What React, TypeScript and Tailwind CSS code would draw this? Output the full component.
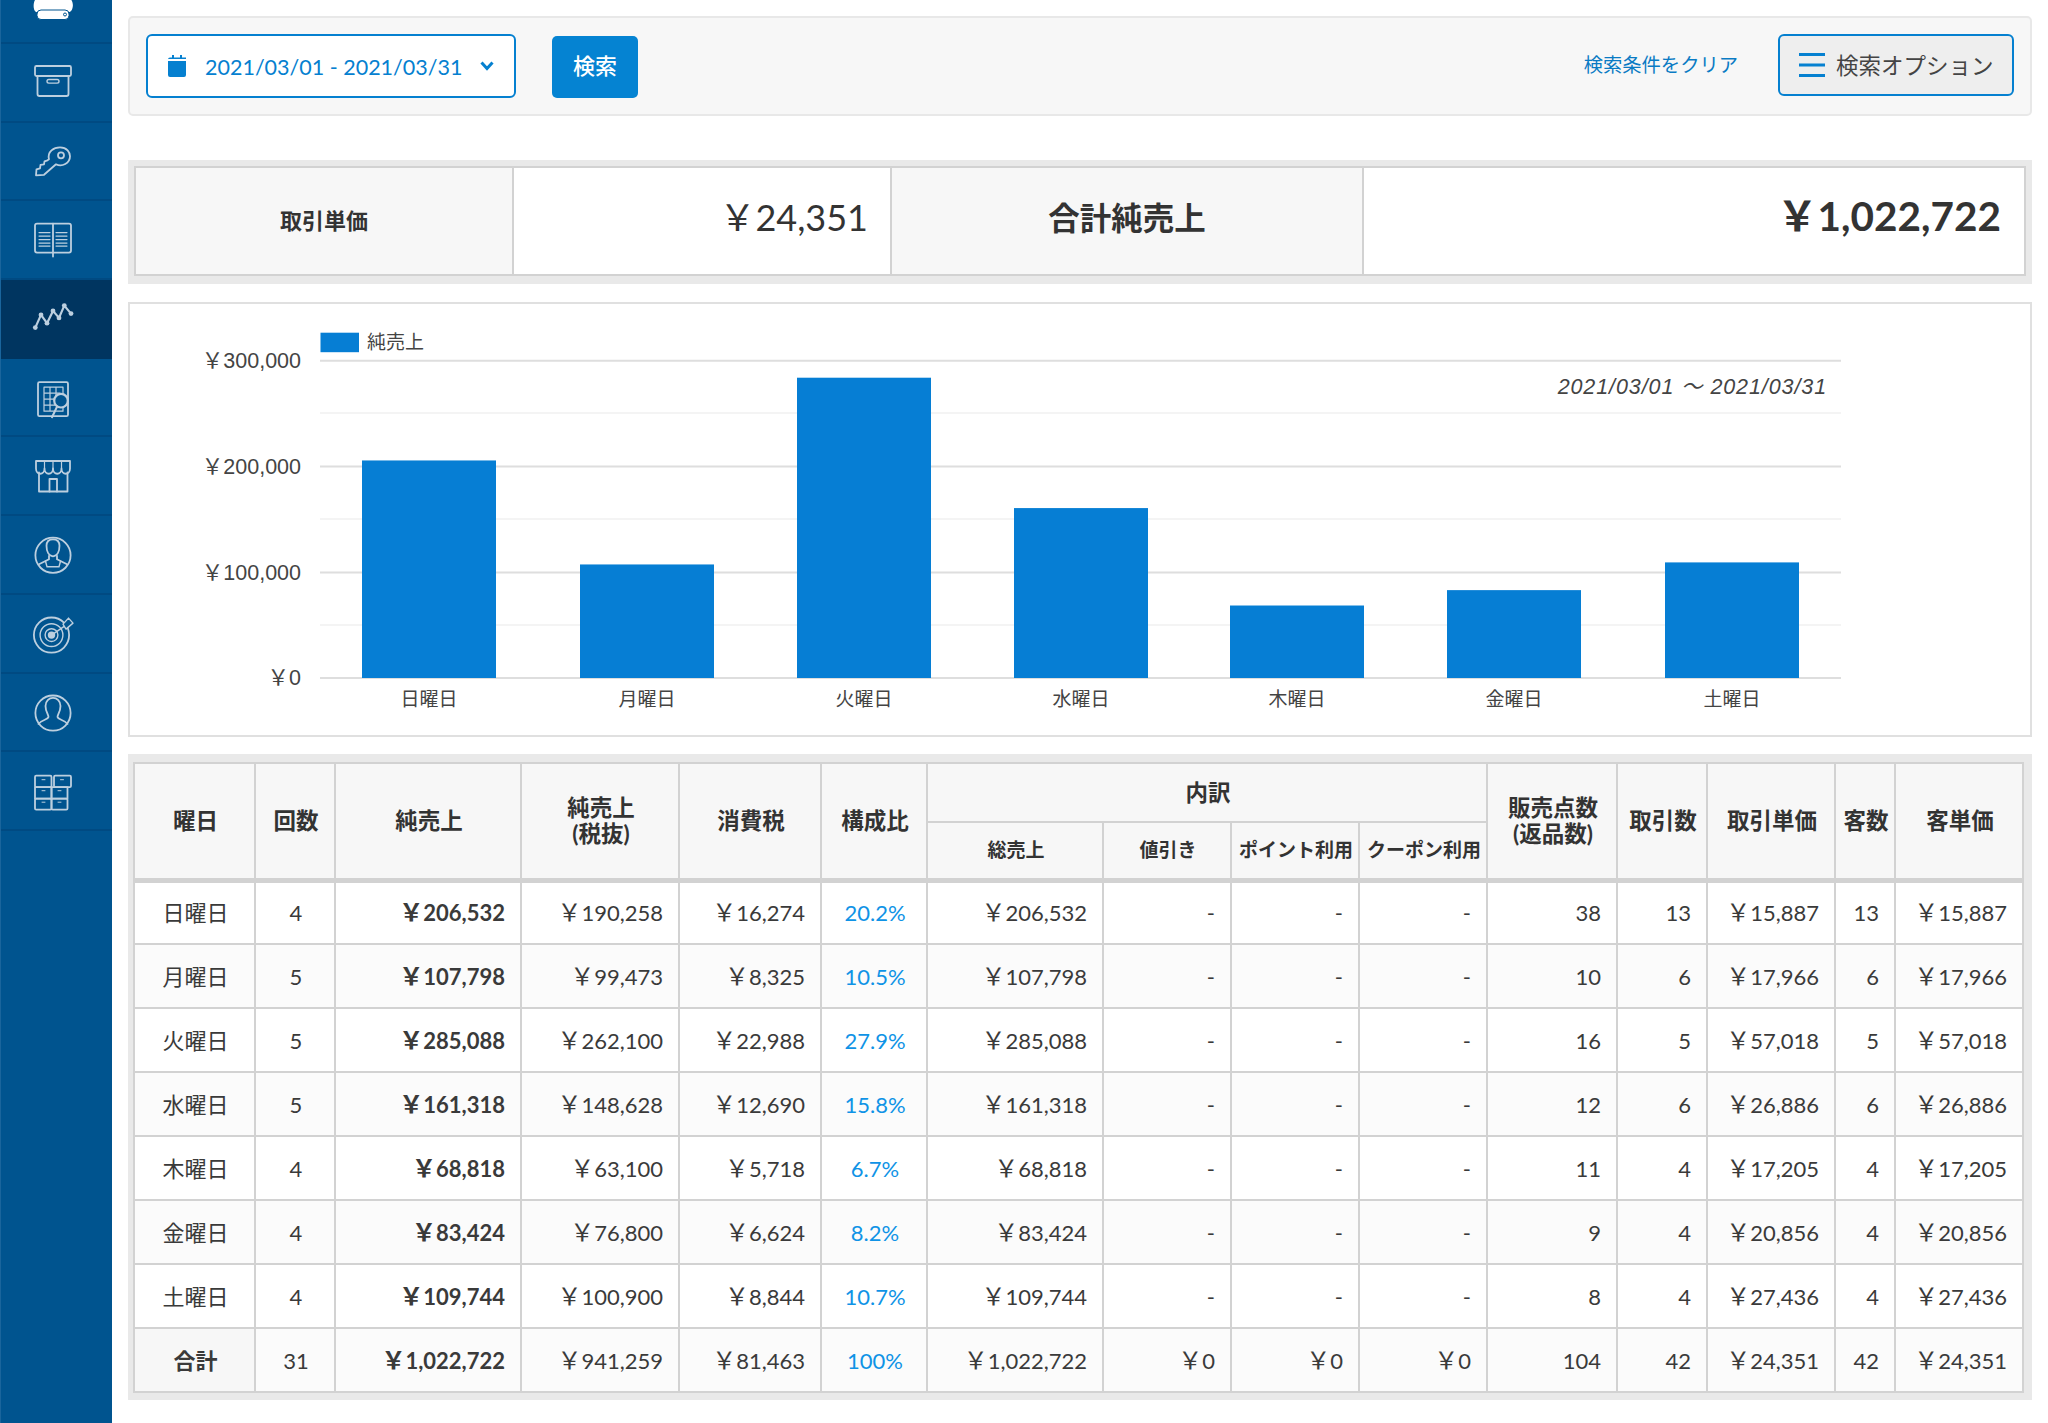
import React from "react";

const Y = "\uFFE5";
const ICON = "#bccfdf";

function Yen() {
  return <span className="text-[24px] leading-none">{Y}</span>;
}

function RowIcon({ top, children }: { top: number; children: React.ReactNode }) {
  return (
    <svg width="112" height="77" viewBox={`0 ${top} 112 77`} fill="none" stroke={ICON} strokeWidth="1.8" strokeLinecap="round" strokeLinejoin="round" className="block">
      {children}
    </svg>
  );
}

const sideIcons: { top: number; active?: boolean; el: React.ReactNode }[] = [
  {
    top: 44,
    el: (
      <>
        <rect x="35" y="66" width="36" height="10" rx="1.5" />
        <path d="M37.5 76v18a2 2 0 0 0 2 2h27a2 2 0 0 0 2-2V76" />
        <rect x="47" y="79.5" width="12" height="3.6" rx="1.8" strokeWidth="1.4" />
      </>
    ),
  },
  {
    top: 122.7,
    el: (
      <>
        <path d="M49 159C47 151 54 147 60 147C67 147 70 152 70 156C70 163 62 167 56 164L44 174.5L36 175L36.5 169L40 168L40.5 164.5L44 164L44.5 161L47.5 160Z" />
        <circle cx="61" cy="155" r="3" />
      </>
    ),
  },
  {
    top: 201.4,
    el: (
      <>
        <rect x="35" y="224" width="36" height="29" rx="2" />
        <path d="M53 224V257" />
        <path d="M39 233H50M39 236.5H50M39 240H50M39 243.5H50M39 246.5H50M56 233H67M56 236.5H67M56 240H67M56 243.5H67M56 246.5H67" strokeWidth="1.2" />
      </>
    ),
  },
  {
    top: 280.1,
    active: true,
    el: (
      <>
        <path d="M35.3 327.7L41 315L47 323.3L53 311L59 318L64.3 305.7L71 313.7" strokeWidth="2.2" />
        <g fill={ICON} stroke="none">
          <circle cx="35.3" cy="327.7" r="2.4" />
          <circle cx="41" cy="315" r="2.4" />
          <circle cx="47" cy="323.3" r="2.4" />
          <circle cx="53" cy="311" r="2.4" />
          <circle cx="59" cy="318" r="2.4" />
          <circle cx="64.3" cy="305.7" r="2.4" />
          <circle cx="71" cy="313.7" r="2.4" />
        </g>
      </>
    ),
  },
  {
    top: 358.8,
    el: (
      <>
        <rect x="38" y="382" width="30" height="34" rx="1.5" />
        <path d="M44 387H63V411H44ZM44 393H60M44 399H58M44 405H55M50 387V411M56 387V398" strokeWidth="1.2" />
        <circle cx="61" cy="400.5" r="6.8" fill="#00548f" strokeWidth="2.2" />
        <path d="M57 406.5L52 417" strokeWidth="2" />
      </>
    ),
  },
  {
    top: 437.5,
    el: (
      <>
        <path d="M36 461.5H70V469C70 476 61.5 476 61.5 469C61.5 476 53 476 53 469C53 476 44.5 476 44.5 469C44.5 476 36 476 36 469Z" />
        <path d="M44.5 461.5V469M53 461.5V469M61.5 461.5V469" strokeWidth="1.2" />
        <path d="M39 473V492H67.5V473" />
        <path d="M49.5 492V479.5H57V492" />
      </>
    ),
  },
  {
    top: 516.2,
    el: (
      <>
        <circle cx="53" cy="555.5" r="17.6" />
        <path d="M46.5 546C46.5 541.5 49.5 539.5 53 539.5C56.5 539.5 59.5 541.5 59.5 546C59.5 551 57.5 556 53 556.5C48.5 556 46.5 551 46.5 546Z" />
        <path d="M49 556V559.5L39 564.5M57 556V559.5L67 564.5" />
        <path d="M45.5 561.5L47 567H59L60.5 561.5" strokeWidth="1.4" />
      </>
    ),
  },
  {
    top: 594.9,
    el: (
      <>
        <circle cx="51.5" cy="635" r="17.6" />
        <circle cx="51.5" cy="635" r="11.4" strokeWidth="1.4" />
        <circle cx="51.5" cy="635" r="6.4" strokeWidth="1.4" />
        <circle cx="51.5" cy="635" r="2.8" fill={ICON} />
        <path d="M51.5 635L66 625" strokeWidth="1.4" />
        <path d="M63 624L68.5 618L73 623L66 629Z" fill="#00548f" strokeWidth="1.4" />
      </>
    ),
  },
  {
    top: 673.6,
    el: (
      <>
        <circle cx="53" cy="712.7" r="17.6" />
        <path d="M38.5 723.5C41 719.5 48 719.5 48.5 716.5C48.5 714.5 45.5 711 45.5 705.5C45.5 700.5 49 697.5 53 697.5C57 697.5 60.5 700.5 60.5 705.5C60.5 711 57.5 714.5 57.5 716.5C58 719.5 65 719.5 67.5 723.5" />
      </>
    ),
  },
  {
    top: 752.3,
    el: (
      <>
        <rect x="35" y="776" width="16.5" height="11.5" rx="1.2" />
        <rect x="54" y="776" width="17" height="11.5" rx="1.2" />
        <rect x="35" y="787.5" width="16.5" height="11.5" />
        <rect x="51.5" y="787.5" width="16" height="11.5" />
        <rect x="35" y="799" width="16.5" height="11" rx="1.2" />
        <rect x="51.5" y="799" width="16" height="11" rx="1.2" />
        <path d="M42 780H45M60.5 780H63.5M42 791H45M58 791H61M42 802.5H45M58 802.5H61" strokeWidth="1" />
      </>
    ),
  },
];

function Sidebar() {
  return (
    <aside className="w-[112px] shrink-0 h-[1423px] bg-[#00548f] border-l border-l-[#1a659c] flex flex-col overflow-hidden">
      <div className="h-[44px] shrink-0 border-b-2 border-[#004a82] overflow-hidden">
        <svg width="112" height="42" viewBox="0 0 112 42" className="block -ml-px">
          <path d="M40 -4H66C71 -3 74 3 72.500 8C71.500 13 67 13 66 11H40C38 13 34.500 13 33.800 8C33 3 35 -3 40 -4Z" fill="#fff" />
          <rect x="37" y="10" width="32" height="9.500" rx="4" fill="#fff" stroke="#00548f" strokeWidth="1" />
          <circle cx="65" cy="14.500" r="1.500" fill="none" stroke="#00548f" strokeWidth="1" />
        </svg>
      </div>
      {sideIcons.map((s) => (
        <div key={s.top} className={s.active ? "h-[78.7px] shrink-0 bg-[#003560] border-b-2 border-[#003560] -ml-px" : "h-[78.7px] shrink-0 border-b-2 border-[#004a82] -ml-px"}>
          <RowIcon top={s.top}>{s.el}</RowIcon>
        </div>
      ))}
    </aside>
  );
}

function SearchBar() {
  return (
    <div className="h-[100px] rounded-[5px] border-2 border-[#e8e8e8] bg-[#f7f7f7] flex items-center pl-[16px] pr-[16px]">
      <button className="w-[370px] h-[64px] rounded-[6px] border-2 border-[#0580d0] bg-white flex items-center pl-[20px] text-[#0580d0] text-[21.500px]">
        <svg width="18" height="22" viewBox="0 0 18 22" fill="#0580d0" className="shrink-0 mr-[19px]">
          <path d="M4 0h2v4H4zM12 0h2v4h-2z" />
          <path d="M2 2.500h16v1.500H0V4.500A2 2 0 0 1 2 2.500zM0 6h18v14a2 2 0 0 1-2 2H2a2 2 0 0 1-2-2z" />
        </svg>
        <span className="leading-none mt-[3px]">2021/03/01 - 2021/03/31</span>
        <svg width="14" height="10" viewBox="0 0 14 10" className="ml-[18px] -mt-[1px]" fill="none" stroke="#0580d0" strokeWidth="3">
          <path d="M1.500 1.500L7 7.500L12.500 1.500" />
        </svg>
      </button>
      <button className="ml-[36px] mt-[2px] w-[86px] h-[62px] rounded-[5px] bg-[#0583d2] text-white text-[22px] font-medium pb-[3px]">検索</button>
      <a className="ml-auto text-[19.300px] text-[#0a7bc4] -mt-[1px]">検索条件をクリア</a>
      <button className="ml-[40px] -mt-[2px] w-[236px] h-[62px] rounded-[6px] border-2 border-[#0580d0] bg-[#eeeeee] flex items-center pl-[19px] text-[22.500px] text-[#444] leading-none">
        <svg width="26" height="24" viewBox="0 0 26 24" fill="#0580d0" className="shrink-0 mr-[11px]">
          <rect x="0" y="0" width="26" height="3" />
          <rect x="0" y="10.500" width="26" height="3" />
          <rect x="0" y="21" width="26" height="3" />
        </svg>
        <span className="mt-[2px]">検索オプション</span>
      </button>
    </div>
  );
}

function Summary() {
  return (
    <div className="mt-[44px] h-[124px] bg-[#e9e9e9] p-[6px] pb-[8px]">
      <div className="h-[110px] border-2 border-[#d2d2d2] flex text-[#333]">
        <div className="w-[378px] bg-[#f7f7f7] border-r-2 border-[#d2d2d2] flex items-center justify-center text-[22px] font-bold pb-[2px]">取引単価</div>
        <div className="w-[378px] bg-white border-r-2 border-[#d2d2d2] flex items-center justify-end pr-[22px] text-[36px] pb-[8px]">{Y}24,351</div>
        <div className="w-[472px] bg-[#f7f7f7] border-r-2 border-[#d2d2d2] flex items-center justify-center text-[31.500px] font-bold pb-[4px]">合計純売上</div>
        <div className="flex-1 bg-white flex items-center justify-end pr-[23px] text-[40.500px] font-bold pb-[10px]">{Y}1,022,722</div>
      </div>
    </div>
  );
}

const bars = [
  { l: "日曜日", v: 206532, x: 362 },
  { l: "月曜日", v: 107798, x: 580 },
  { l: "火曜日", v: 285088, x: 797 },
  { l: "水曜日", v: 161318, x: 1014 },
  { l: "木曜日", v: 68818, x: 1230 },
  { l: "金曜日", v: 83424, x: 1447 },
  { l: "土曜日", v: 109744, x: 1665 },
];

function Chart() {
  const chartFont = '"Liberation Sans","Noto Sans CJK JP",sans-serif';
  return (
    <div className="mt-[18px] h-[435px] border-2 border-[#e0e0e0] bg-white">
      <svg width="1900" height="431" viewBox="130 304 1900 431" className="block" fontFamily={chartFont} fill="#444">
        {[413, 519, 625].map((y) => (
          <line key={y} x1="320" x2="1841" y1={y} y2={y} stroke="#f1f1f1" strokeWidth="1.5" />
        ))}
        {[360.7, 466.5, 572.5, 678].map((y) => (
          <line key={y} x1="320" x2="1841" y1={y} y2={y} stroke="#dedede" strokeWidth="2" />
        ))}
        {bars.map((b) => {
          const h = (b.v * 316) / 300000;
          return (
            <g key={b.x}>
              <rect x={b.x} y={678 - h} width="134" height={h} fill="#067ed4" />
              <text x={b.x + 67} y="706" fontSize="19" textAnchor="middle">{b.l}</text>
            </g>
          );
        })}
        {[
          ["¥300,000", 368],
          ["¥200,000", 474],
          ["¥100,000", 580],
          ["¥0", 685],
        ].map(([t, y]) => (
          <text key={t as string} x="301" y={y as number} fontSize="21.500" textAnchor="end">
            {(t as string).replace("¥", Y)}
          </text>
        ))}
        <rect x="320.500" y="332.700" width="38.500" height="19.500" fill="#067ed4" />
        <text x="367" y="349" fontSize="19">純売上</text>
        <text x="1827" y="393.500" fontSize="21.500" letterSpacing="0.9" textAnchor="end" fontStyle="italic">2021/03/01 〜 2021/03/31</text>
      </svg>
    </div>
  );
}

const rows = [
  ["日曜日", "4", "206,532", "190,258", "16,274", "20.2%", "206,532", "38", "13", "15,887", "13", "15,887"],
  ["月曜日", "5", "107,798", "99,473", "8,325", "10.5%", "107,798", "10", "6", "17,966", "6", "17,966"],
  ["火曜日", "5", "285,088", "262,100", "22,988", "27.9%", "285,088", "16", "5", "57,018", "5", "57,018"],
  ["水曜日", "5", "161,318", "148,628", "12,690", "15.8%", "161,318", "12", "6", "26,886", "6", "26,886"],
  ["木曜日", "4", "68,818", "63,100", "5,718", "6.7%", "68,818", "11", "4", "17,205", "4", "17,205"],
  ["金曜日", "4", "83,424", "76,800", "6,624", "8.2%", "83,424", "9", "4", "20,856", "4", "20,856"],
  ["土曜日", "4", "109,744", "100,900", "8,844", "10.7%", "109,744", "8", "4", "27,436", "4", "27,436"],
];
const total = ["合計", "31", "1,022,722", "941,259", "81,463", "100%", "1,022,722", "104", "42", "24,351", "42", "24,351"];

const widths = ["w-[121px]", "w-[80px]", "w-[186px]", "w-[158px]", "w-[142px]", "w-[106px]", "w-[176px]", "w-[128px]", "w-[128px]", "w-[128px]", "w-[130px]", "w-[90px]", "w-[128px]", "w-[60px]", "w-[128px]"];

const th = "border-2 border-[#d2d2d2] bg-[#f7f7f7] font-bold text-center pl-[2px] pr-0 py-0 text-[22.500px] leading-[26px] text-[#333]";
const thSub = "border-2 border-b-[5px] border-[#d2d2d2] bg-[#f7f7f7] font-bold text-center pl-[2px] pr-0 py-0 text-[19px] whitespace-nowrap text-[#333]";
const td = "border-2 border-[#d2d2d2] text-right pr-[15px] pl-0";
const tdc = "border-2 border-[#d2d2d2] text-center pl-[2px]";

function Row({ r, last, even }: { r: string[]; last?: boolean; even: boolean }) {
  const bg = even ? "bg-[#fbfbfb]" : "bg-white";
  return (
    <tr className={`h-[64px] ${bg}`}>
      <td className={last ? `${tdc} font-bold bg-[#f7f7f7]` : tdc}>{r[0]}</td>
      <td className={tdc}>{r[1]}</td>
      <td className={`${td} font-bold`}><Yen />{r[2]}</td>
      <td className={td}><Yen />{r[3]}</td>
      <td className={td}><Yen />{r[4]}</td>
      <td className={`${tdc} text-[#0f93e6]`}>{r[5]}</td>
      <td className={td}><Yen />{r[6]}</td>
      <td className={td}>{last ? <><Yen />0</> : "-"}</td>
      <td className={td}>{last ? <><Yen />0</> : "-"}</td>
      <td className={td}>{last ? <><Yen />0</> : "-"}</td>
      <td className={td}>{r[7]}</td>
      <td className={td}>{r[8]}</td>
      <td className={td}><Yen />{r[9]}</td>
      <td className={td}>{r[10]}</td>
      <td className={td}><Yen />{r[11]}</td>
    </tr>
  );
}

function DataTable() {
  return (
    <div className="mt-[17px] h-[646px] bg-[#e9e9e9] pt-[8px] pl-[5px]">
      <table className="table-fixed border-collapse w-[1889px] text-[22px] text-[#3a3a3a]">
        <colgroup>
          {widths.map((w, i) => (
            <col key={i} className={w} />
          ))}
        </colgroup>
        <thead>
          <tr className="h-[59px]">
            <th rowSpan={2} className={`${th} border-b-[5px]`}>曜日</th>
            <th rowSpan={2} className={`${th} border-b-[5px]`}>回数</th>
            <th rowSpan={2} className={`${th} border-b-[5px]`}>純売上</th>
            <th rowSpan={2} className={`${th} border-b-[5px]`}>純売上<br />(税抜)</th>
            <th rowSpan={2} className={`${th} border-b-[5px]`}>消費税</th>
            <th rowSpan={2} className={`${th} border-b-[5px]`}>構成比</th>
            <th colSpan={4} className={th}>内訳</th>
            <th rowSpan={2} className={`${th} border-b-[5px]`}>販売点数<br />(返品数)</th>
            <th rowSpan={2} className={`${th} border-b-[5px]`}>取引数</th>
            <th rowSpan={2} className={`${th} border-b-[5px]`}>取引単価</th>
            <th rowSpan={2} className={`${th} border-b-[5px]`}>客数</th>
            <th rowSpan={2} className={`${th} border-b-[5px]`}>客単価</th>
          </tr>
          <tr className="h-[58px]">
            <th className={thSub}>総売上</th>
            <th className={thSub}>値引き</th>
            <th className={thSub}>ポイント利用</th>
            <th className={thSub}>クーポン利用</th>
          </tr>
        </thead>
        <tbody>
          {rows.map((r, i) => (
            <Row key={r[0]} r={r} even={i % 2 === 1} />
          ))}
          <Row r={total} last even />
        </tbody>
      </table>
    </div>
  );
}

export default function App() {
  return (
    <div className="flex w-[2048px] h-[1423px] overflow-hidden bg-white font-['Lato','Noto_Sans_CJK_JP',sans-serif]">
      <Sidebar />
      <main className="w-[1904px] ml-[16px] pt-[16px]">
        <SearchBar />
        <Summary />
        <Chart />
        <DataTable />
      </main>
    </div>
  );
}
